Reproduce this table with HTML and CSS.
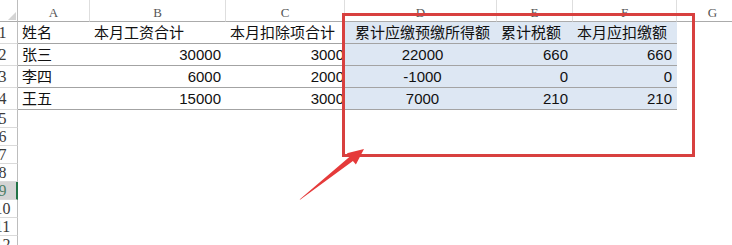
FILE: index.html
```html
<!DOCTYPE html>
<html lang="zh-CN">
<head>
<meta charset="utf-8">
<title>个税计算表</title>
<link rel="stylesheet" href="styles.css">
</head>
<body>
<div class="page">
  <div class="sheet">
    <!-- column headers -->
    <div class="corner"><svg width="18" height="22" viewBox="0 0 18 22"><polygon points="16,12 16,20 8,20" fill="#d4d4d4"/></svg></div>
    <div class="ch">A</div>
    <div class="ch">B</div>
    <div class="ch">C</div>
    <div class="ch">D</div>
    <div class="ch">E</div>
    <div class="ch">F</div>
    <div class="ch">G</div>

    <!-- row 1 -->
    <div class="rh"><span>1</span></div>
    <div class="c b txt">姓名</div>
    <div class="c b txt">本月工资合计</div>
    <div class="c b txt">本月扣除项合计</div>
    <div class="c b hl ctr">累计应缴预缴所得额</div>
    <div class="c b hl txt">累计税额</div>
    <div class="c b hl txt">本月应扣缴额</div>
    <div class="c"></div>

    <!-- row 2 -->
    <div class="rh"><span>2</span></div>
    <div class="c b txt">张三</div>
    <div class="c b num">30000</div>
    <div class="c b num tight">3000</div>
    <div class="c b hl ctr">22000</div>
    <div class="c b hl num">660</div>
    <div class="c b hl num">660</div>
    <div class="c"></div>

    <!-- row 3 -->
    <div class="rh"><span>3</span></div>
    <div class="c b txt">李四</div>
    <div class="c b num">6000</div>
    <div class="c b num tight">2000</div>
    <div class="c b hl ctr">-1000</div>
    <div class="c b hl num">0</div>
    <div class="c b hl num">0</div>
    <div class="c"></div>

    <!-- row 4 -->
    <div class="rh"><span>4</span></div>
    <div class="c b txt">王五</div>
    <div class="c b num">15000</div>
    <div class="c b num tight">3000</div>
    <div class="c b hl ctr">7000</div>
    <div class="c b hl num">210</div>
    <div class="c b hl num">210</div>
    <div class="c"></div>

    <!-- empty rows -->
    <div class="rh"><span>5</span></div><div class="c wide"></div>
    <div class="rh"><span>6</span></div><div class="c wide"></div>
    <div class="rh"><span>7</span></div><div class="c wide"></div>
    <div class="rh"><span>8</span></div><div class="c wide"></div>
    <div class="rh sel"><span>9</span></div><div class="c wide"></div>
    <div class="rh"><span>10</span></div><div class="c wide"></div>
    <div class="rh"><span>11</span></div><div class="c wide"></div>
    <div class="rh"><span>12</span></div><div class="c wide"></div>
  </div>

  <!-- annotation: box around the computed columns and a pointer arrow -->
  <div class="mark"></div>
  <svg class="arrow" width="732" height="245" viewBox="0 0 732 245">
    <polygon points="299.6,199.4 349.9,156.6 346.9,153.2 364,149 355.9,164.6 352.9,160.9 300.4,199.6" fill="#e53a3a"/>
  </svg>
</div>
</body>
</html>
```

FILE: styles.css
```css
html, body {
  margin: 0;
  padding: 0;
  background: #ffffff;
}

.page {
  position: relative;
  width: 732px;
  height: 245px;
  overflow: hidden;
  background: #ffffff;
}

.sheet {
  display: grid;
  grid-template-columns: 18px 72px 136px 119px 152px 76px 104px 72px;
  grid-template-rows: repeat(5, 22px) repeat(8, 18px);
  width: 749px;
  font-family: "Liberation Sans", "Noto Sans CJK SC", sans-serif;
  font-size: 15px;
  color: #111111;
}

.corner {
  box-sizing: border-box;
  border-right: 1px solid #bdbdbd;
  border-bottom: 1px solid #ababab;
}

.corner svg {
  display: block;
}

.ch {
  box-sizing: border-box;
  display: flex;
  align-items: flex-end;
  justify-content: center;
  padding-bottom: 2px;
  border-right: 1px solid #dedede;
  border-bottom: 1px solid #ababab;
  font-family: "Liberation Serif", serif;
  font-size: 13px;
  line-height: 13px;
  color: #555555;
}

/* row numbers sit in a wider gutter whose left part is scrolled out of view */
.rh {
  box-sizing: border-box;
  display: flex;
  align-items: center;
  overflow: hidden;
  border-right: 1px solid #bdbdbd;
  border-bottom: 1px solid #dadada;
  font-family: "Liberation Serif", serif;
  font-size: 16px;
  color: #3a3a3a;
}

.rh span {
  flex: none;
  width: 31px;
  margin-left: -13px;
  text-align: center;
  line-height: 16px;
}

.rh.sel {
  background: #d4d4d4;
  border-right: 2px solid #217346;
}

.rh.sel span {
  color: #4f7f66;
}

.c {
  box-sizing: border-box;
  display: flex;
  align-items: center;
  white-space: nowrap;
  line-height: 20px;
}

.c.wide {
  grid-column: 2 / 9;
}

.b {
  border-bottom: 1px solid #a3a3a3;
}

.hl {
  background: #dde7f3;
}

.txt {
  justify-content: flex-start;
  padding-left: 4px;
}

.num {
  justify-content: flex-end;
  padding-right: 5px;
}

.num.tight {
  padding-right: 1px;
}

.ctr {
  justify-content: center;
  padding-left: 3px;
}

.mark {
  position: absolute;
  left: 342px;
  top: 13px;
  width: 353px;
  height: 144px;
  box-sizing: border-box;
  border: 3px solid #d8403f;
}

.arrow {
  position: absolute;
  left: 0;
  top: 0;
  pointer-events: none;
}
```
